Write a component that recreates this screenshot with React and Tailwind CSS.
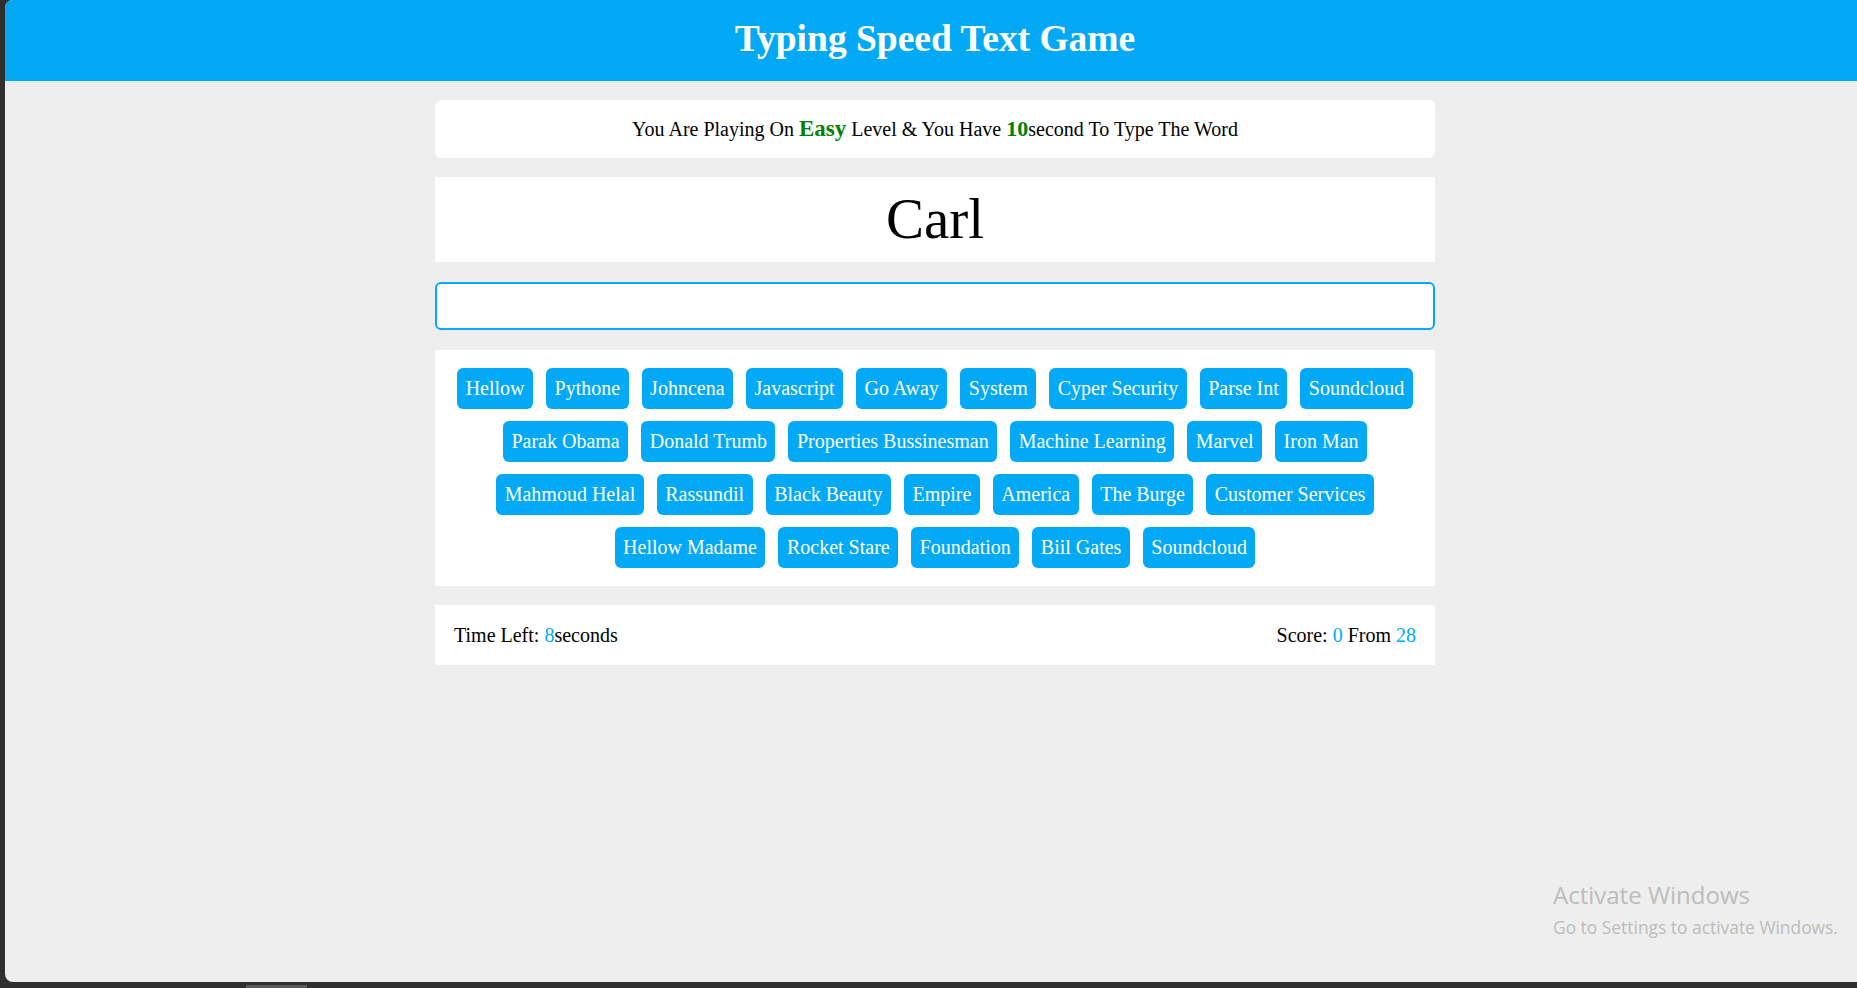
const words = [
  "Hellow", "Pythone", "Johncena", "Javascript", "Go Away", "System", "Cyper Security", "Parse Int", "Soundcloud",
  "Parak Obama", "Donald Trumb", "Properties Bussinesman", "Machine Learning", "Marvel", "Iron Man",
  "Mahmoud Helal", "Rassundil", "Black Beauty", "Empire", "America", "The Burge", "Customer Services",
  "Hellow Madame", "Rocket Stare", "Foundation", "Biil Gates", "Soundcloud",
];

const App = () => {
  return (
    <div className="relative w-[1857px] h-[988px] overflow-hidden bg-[#2f2f2f] font-['Liberation_Serif',serif]">
      <div className="ml-[5px] w-[1860px] h-[982px] bg-[#eeeeee] rounded-l-[8px] overflow-hidden">
        <header className="h-[81px] bg-[#03a9f4] flex items-center justify-center">
          <h1 className="text-white text-[37.5px] font-bold leading-none pb-[3px]">Typing Speed Text Game</h1>
        </header>

        <main className="w-[1000px] mx-auto pt-[19px] flex flex-col">
          <div className="h-[58px] bg-white rounded-[6px] flex items-center justify-center text-[20px] text-black">
            <span>
              You Are Playing On <span className="text-[23px] font-bold text-[#008000]">Easy</span> Level &amp; You Have{" "}
              <span className="text-[22px] font-bold text-[#008000]">10</span>second To Type The Word
            </span>
          </div>

          <div className="mt-[19px] h-[85px] bg-white flex items-center justify-center">
            <span className="text-[57px] leading-none text-black pb-[2px]">Carl</span>
          </div>

          <input
            type="text"
            className="mt-[20px] h-[48px] w-full bg-white border-2 border-[#03a9f4] rounded-[6px] outline-none px-3 text-[20px]"
          />

          <div className="mt-[20px] bg-white px-[18px] py-[18px] flex flex-wrap justify-center gap-x-[13px] gap-y-[12px]">
            {words.map((w, i) => (
              <span
                key={i}
                className="bg-[#03a9f4] text-white text-[20px] leading-[23px] px-[8.5px] py-[9px] rounded-[6px]"
              >
                {w}
              </span>
            ))}
          </div>

          <div className="mt-[19px] h-[60px] bg-white px-[19px] flex items-center justify-between text-[20px] text-black">
            <div>
              Time Left: <span className="text-[#03a9f4]">8</span>seconds
            </div>
            <div>
              Score: <span className="text-[#03a9f4]">0</span> From <span className="text-[#03a9f4]">28</span>
            </div>
          </div>
        </main>
      </div>

      <div className="absolute left-[1553px] top-[883px] text-[#bcbcbc] font-['Open_Sans',sans-serif] leading-none">
        <div className="text-[24px]">Activate Windows</div>
        <div className="text-[17.4px] mt-[12px]">Go to Settings to activate Windows.</div>
      </div>

      <div className="absolute left-[246px] top-[985px] w-[61px] h-[3px] bg-[#5a5a5a]" />
    </div>
  );
};

export default App;
